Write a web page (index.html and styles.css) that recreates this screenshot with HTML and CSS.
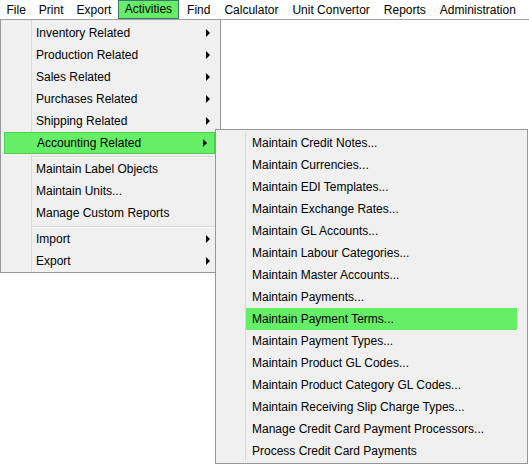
FILE: index.html
```html
<!DOCTYPE html>
<html lang="en">
<head>
  <meta charset="UTF-8">
  <title>Activities Menu</title>
  <link rel="stylesheet" href="styles.css">
</head>
<body>
  <div class="menubar">
    <span class="top-item">File</span>
    <span class="top-item">Print</span>
    <span class="top-item">Export</span>
    <span class="top-item open">Activities</span>
    <span class="top-item">Find</span>
    <span class="top-item">Calculator</span>
    <span class="top-item">Unit Convertor</span>
    <span class="top-item">Reports</span>
    <span class="top-item">Administration</span>
  </div>

  <div class="menu main-menu">
    <div class="item sub">Inventory Related</div>
    <div class="item sub">Production Related</div>
    <div class="item sub">Sales Related</div>
    <div class="item sub">Purchases Related</div>
    <div class="item sub">Shipping Related</div>
    <div class="item sub active">Accounting Related</div>
    <div class="sep"></div>
    <div class="item">Maintain Label Objects</div>
    <div class="item">Maintain Units...</div>
    <div class="item">Manage Custom Reports</div>
    <div class="sep"></div>
    <div class="item sub">Import</div>
    <div class="item sub">Export</div>
  </div>

  <div class="menu sub-menu">
    <div class="item">Maintain Credit Notes...</div>
    <div class="item">Maintain Currencies...</div>
    <div class="item">Maintain EDI Templates...</div>
    <div class="item">Maintain Exchange Rates...</div>
    <div class="item">Maintain GL Accounts...</div>
    <div class="item">Maintain Labour Categories...</div>
    <div class="item">Maintain Master Accounts...</div>
    <div class="item">Maintain Payments...</div>
    <div class="item hover">Maintain Payment Terms...</div>
    <div class="item">Maintain Payment Types...</div>
    <div class="item">Maintain Product GL Codes...</div>
    <div class="item">Maintain Product Category GL Codes...</div>
    <div class="item">Maintain Receiving Slip Charge Types...</div>
    <div class="item">Manage Credit Card Payment Processors...</div>
    <div class="item">Process Credit Card Payments</div>
  </div>
</body>
</html>
```

FILE: styles.css
```css
body {
  margin: 0;
  font-family: "Liberation Sans", Arial, sans-serif;
  font-size: 12px;
  color: #000;
  background-color: #fff;
  width: 529px;
  height: 465px;
  position: relative;
  overflow: hidden;
}
.menubar {
  display: flex;
  height: 19px;
  border-bottom: 1px solid #a0a0a0;
  white-space: nowrap;
}
.top-item {
  padding: 1px 6.5px 0;
  line-height: 18px;
  box-sizing: border-box;
  white-space: nowrap;
}
.top-item.open {
  background-color: #66ee66;
  border: 1px solid #3d7a6c;
  line-height: 17px;
  padding: 0 6px;
  margin: 0 1px 0 0;
}
.top-item.open ~ .top-item {
  padding: 1px 7px 0;
}
.menu {
  position: absolute;
  background-color: #f0f0f0;
  border: 1px solid #979797;
  box-sizing: border-box;
  padding: 2px 2px;
  white-space: nowrap;
}
.main-menu {
  left: 0;
  top: 20px;
  width: 221px;
  height: 253px;
  border-top: none;
  background-image: linear-gradient(#d7d7d7, #d7d7d7);
  background-size: 1px 100%;
  background-position: 30px 0;
  background-repeat: no-repeat;
}
.sub-menu {
  left: 215px;
  top: 129px;
  width: 313px;
  height: 335px;
  background-image: linear-gradient(#d7d7d7, #d7d7d7);
  background-size: 1px calc(100% - 4px);
  background-position: 29px 2px;
  background-repeat: no-repeat;
}
.item {
  height: 22px;
  line-height: 22px;
  padding-left: 33px;
  position: relative;
  box-sizing: border-box;
}
.sub-menu .item {
  padding-left: 34px;
}
.item.sub::after {
  content: "";
  position: absolute;
  right: 8px;
  top: 7px;
  border-left: 4px solid #000;
  border-top: 4px solid transparent;
  border-bottom: 4px solid transparent;
}
.item.active {
  background-color: #66ee66;
  border: 1px solid #4fcf4f;
  line-height: 20px;
  padding-left: 32px;
  margin-left: 1px;
  margin-right: 3px;
}
.item.active::after {
  right: 7px;
  top: 6px;
}
.item.hover {
  background-color: #66ee66;
  margin-left: 28px;
  margin-right: 8px;
  padding-left: 6px;
}
.sep {
  height: 1px;
  background-color: #d7d7d7;
  margin: 2px 0 0 29px;
  border-bottom: 1px solid #fff;
}
```
